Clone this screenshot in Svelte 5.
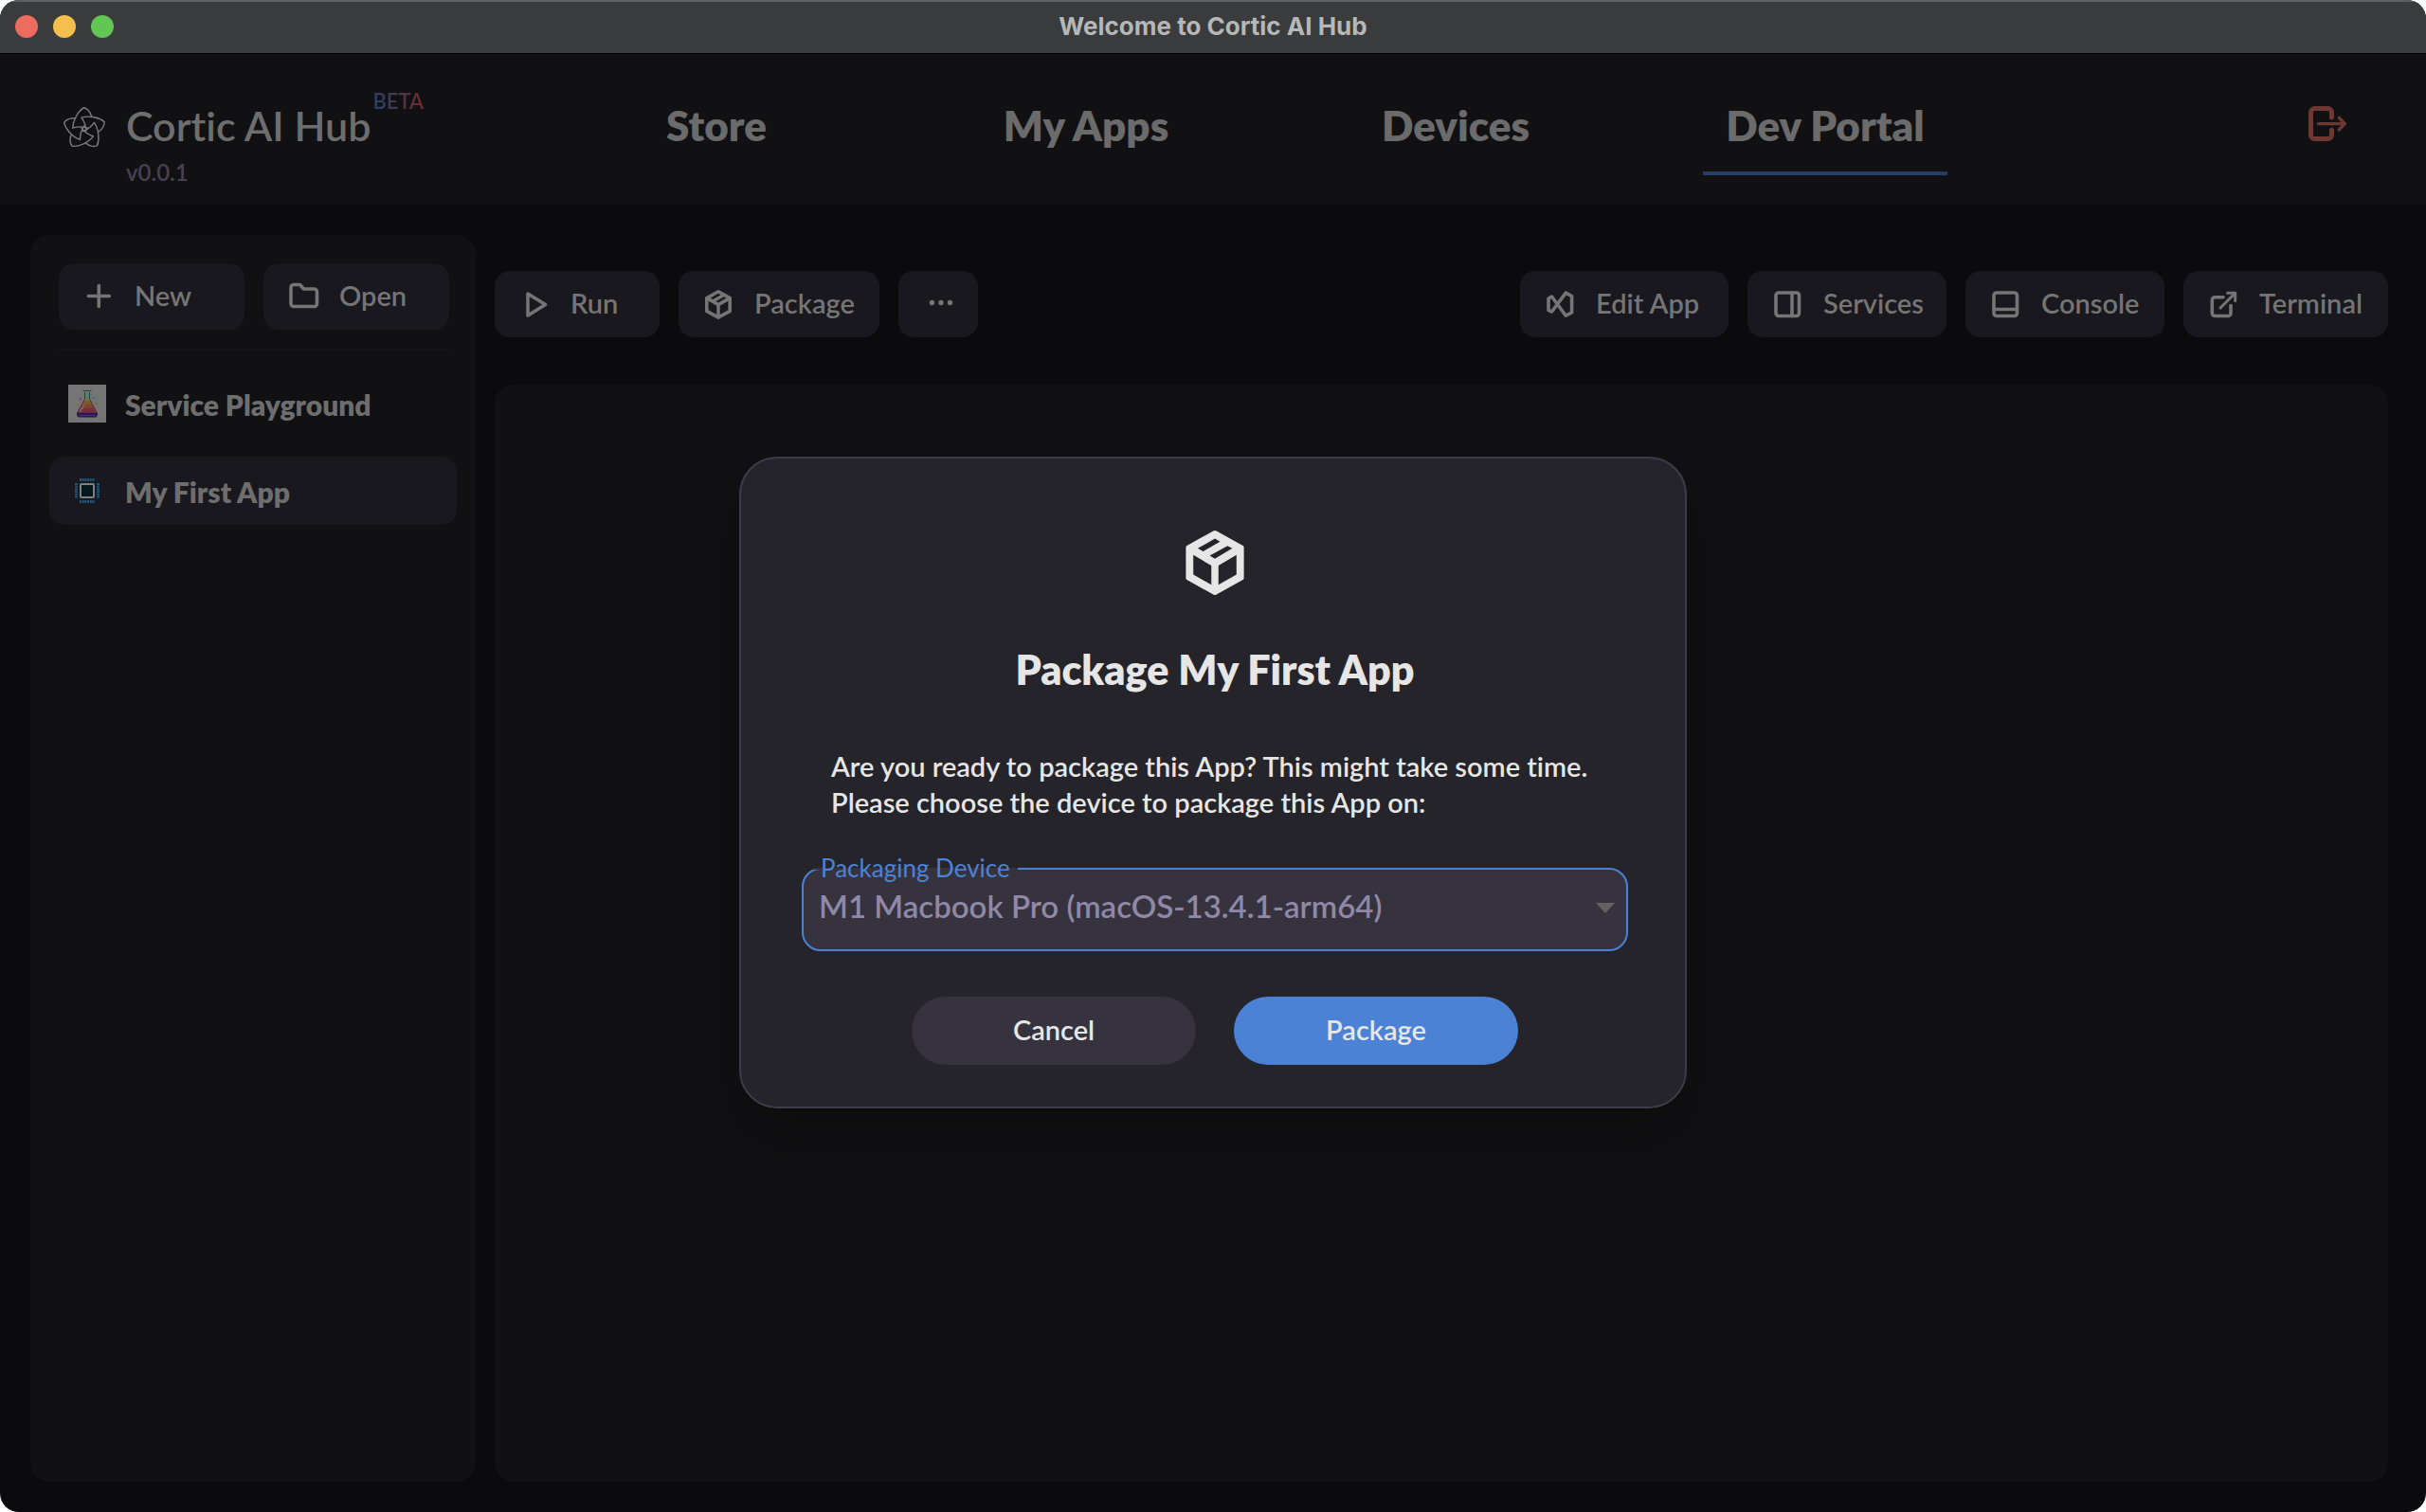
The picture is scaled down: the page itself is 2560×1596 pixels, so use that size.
<script>
  const tabs = [
    { label: 'Store', href: '#store' },
    { label: 'My Apps', href: '#apps' },
    { label: 'Devices', href: '#devices' },
    { label: 'Dev Portal', href: '#dev' }
  ];
  const leftTools = [
    { label: 'Run', icon: 'run', size: 'small' },
    { label: 'Package', icon: 'package', size: 'regular' },
    { label: '', icon: 'more', size: 'tiny' }
  ];
  const rightTools = [
    { label: 'Edit App', icon: 'editor', size: 'large' },
    { label: 'Services', icon: 'services', size: 'medium' },
    { label: 'Console', icon: 'console', size: 'medium' },
    { label: 'Terminal', icon: 'external', size: 'wide' }
  ];
  const angles = [0, 72, 144, 216, 288];
  let activeTab = $state('Dev Portal');
  let device = $state('m1');
</script>

{#snippet cube()}
  <path
    fill="currentColor"
    fill-rule="evenodd"
    d="M11.5 2.15Q12 1.85 12.5 2.15L20.7 6.7Q21 6.9 21 7.3V16.7Q21 17.1 20.7 17.3L12.5 21.85Q12 22.15 11.5 21.85L3.3 17.3Q3 17.1 3 16.7V7.3Q3 6.9 3.3 6.7ZM12 4.5L6.7 7.55L8.35 8.5L13.6 5.45ZM15.9 6.75L10.4 9.8L12 10.75L17.4 7.55ZM5.3 9.6V15.65L10.9 18.85V12.9ZM18.7 9.6L13.1 12.9V18.85L18.7 15.65Z"
  />
{/snippet}

{#snippet icon(name)}
  {#if name === 'package'}
    <svg class="icon" viewBox="1.7 1.4 20.6 20.6" aria-hidden="true">{@render cube()}</svg>
  {:else}
    <svg class="icon line" viewBox="0 0 32 32" aria-hidden="true">
      {#if name === 'run'}
        <path d="M9 5L27.5 16.5L9 28Z" />
      {:else if name === 'more'}
        <g class="dots"><circle cx="9.5" cy="14.5" r="2.7" /><circle cx="19" cy="14.5" r="2.7" /><circle cx="28.5" cy="14.5" r="2.7" /></g>
      {:else if name === 'editor'}
        <path d="M4 10L7.5 8L22.3 28.2L28.6 25V7.6L22.3 4.2L7.5 24L4 22.4Z" />
      {:else if name === 'services'}
        <rect x="4" y="4" width="24.5" height="24.5" rx="3" /><path d="M21 4V28.5" />
      {:else if name === 'console'}
        <rect x="4" y="4" width="24.5" height="24.5" rx="3" /><path d="M4 21.5H28.5" />
      {:else if name === 'external'}
        <path d="M16 8.7H7.3a3 3 0 0 0-3 3V25.5a3 3 0 0 0 3 3H21a3 3 0 0 0 3-3V17.5" />
        <path class="thin" d="M13 20L28.5 4.5M20.5 4.3H28.7V12.5" />
      {:else if name === 'plus'}
        <path d="M16.3 5.5V27.5M5.3 16.5H27.3" />
      {:else if name === 'folder'}
        <path d="M6 4.5h6.5l4 4.5H27.5a3 3 0 0 1 3 3v12.5a3 3 0 0 1-3 3H6a3 3 0 0 1-3-3V7.5a3 3 0 0 1 3-3z" />
      {/if}
    </svg>
  {/if}
{/snippet}

{#snippet tool(item)}
  <button class="tool {item.size}" type="button" aria-label={item.label || 'More actions'}>
    {@render icon(item.icon)}
    {#if item.label}<span>{item.label}</span>{/if}
  </button>
{/snippet}

<div class="window">
  <div class="titlebar">
    <div class="lights"><i class="red"></i><i class="yellow"></i><i class="green"></i></div>
    <div class="title">Welcome to Cortic AI Hub</div>
  </div>

  <header>
    <div class="brand">
      <svg class="logo" viewBox="-24 -24 48 48" aria-hidden="true">
        {#each angles as a}
          <path transform="rotate({a})" d="M7.5 -13.5C6 -19 2 -22 -.5 -22.3C-6 -19 -12 -10 -12.3 -.8C-8 -2.2 -2 -2.6 3 -1" />
        {/each}
      </svg>
      <div class="name">
        <h1>Cortic AI Hub</h1>
        <span class="version">v0.0.1</span>
      </div>
      <span class="beta">BETA</span>
    </div>
    <nav>
      {#each tabs as tab}
        <a href={tab.href} class:active={tab.label === activeTab} onclick={() => (activeTab = tab.label)}>{tab.label}</a>
      {/each}
    </nav>
    <button class="logout" type="button" aria-label="Log out">
      <svg viewBox="0 0 40 37" aria-hidden="true">
        <path d="M24.5 12V6.5a4 4 0 0 0-4-4H6.5a4 4 0 0 0-4 4V30.5a4 4 0 0 0 4 4H20.5a4 4 0 0 0 4-4V25.3" />
        <path class="arrow" d="M10.5 18.6H38M32.3 12.3L38.3 18.6L32.3 24.9" />
      </svg>
    </button>
  </header>

  <div class="content">
    <aside>
      <div class="actions">
        <button class="tool" type="button">{@render icon('plus')}<span>New</span></button>
        <button class="tool" type="button">{@render icon('folder')}<span>Open</span></button>
      </div>
      <div class="apps">
        <button class="app" type="button">
          <svg viewBox="0 0 40 40" aria-hidden="true">
            <rect width="40" height="40" fill="#757575" />
            <g shape-rendering="crispEdges">
              <path fill="#4f8478" d="M18 8h4v6h-4z" />
              <path fill="#717848" d="M18 13h4v3h1v2h-6v-2h1z" />
              <path fill="#7a5a2c" d="M16 17h8v2h1v3H15v-3h1z" />
              <path fill="#7c4430" d="M14 21h12v2h1v2H13v-2h1z" />
              <path fill="#782f3a" d="M12 25h16v2h1v2h1v2H10v-3h1v-2h1z" />
              <path fill="#815c66" d="M15 21h2v2h-1v3h-2v3h-2v-3h1v-2h2z" />
              <path fill="#6b2344" d="M10 29h20v2H10z" />
              <path fill="#2b1752" d="M9 30h22v3h-1v1H10v-1H9z" />
              <path fill="#4b2c80" d="M11 32h18v1H11z" />
              <path fill="#4b494c" d="M11 34h19v1H11z" />
              <path fill="#357a85" d="M25 13h3v2h-3zM28 15h1v1h-1z" />
              <path fill="#84356c" d="M12 14h2v2h-2zM11 16h1v1h-1z" />
              <path fill="#8a5a30" d="M29 19h2v2h-2zM10 20h1v2h-1zM27 18h1v1h-1z" />
            </g>
            <path fill="none" stroke="#26434a" d="M15.5 6.5H24.5M17.5 8V15M22.5 8V15" />
            <path fill="none" stroke="#4e3039" d="M17.5 15L9.5 30M22.5 15L30.5 30" />
          </svg>
          <span>Service Playground</span>
        </button>
        <button class="app selected" type="button">
          <svg viewBox="0 0 40 40" aria-hidden="true">
            <rect x="9" y="9" width="22" height="22" rx="2" fill="#111d27" />
            <g fill="none" stroke="#225577" stroke-width="3" stroke-dasharray="2 .7">
              <path d="M12 8.5H28M12 31.5H28M8.5 12V28M31.5 12V28" />
            </g>
            <rect x="13" y="13" width="14" height="14" rx="1" fill="#06171e" stroke="#808080" stroke-width="2" />
          </svg>
          <span>My First App</span>
        </button>
      </div>
    </aside>

    <main>
      <div class="toolbar">
        <div class="group">{#each leftTools as t}{@render tool(t)}{/each}</div>
        <div class="group">{#each rightTools as t}{@render tool(t)}{/each}</div>
      </div>
      <section class="canvas" aria-label="App output"></section>
    </main>
  </div>

  <div class="overlay">
    <div class="modal" role="dialog" aria-modal="true" aria-labelledby="dialog-title">
      <svg class="cube" viewBox="2 2 20 20" aria-hidden="true">{@render cube()}</svg>
      <h2 id="dialog-title">Package My First App</h2>
      <p>Are you ready to package this App? This might take some time.<br />Please choose the device to package this App on:</p>
      <div class="field">
        <label for="device">Packaging Device</label>
        <select id="device" bind:value={device}>
          <option value="m1">M1 Macbook Pro (macOS-13.4.1-arm64)</option>
        </select>
        <svg class="caret" viewBox="0 0 20 11" aria-hidden="true"><path d="M0 0H20L10 11Z" /></svg>
      </div>
      <div class="buttons">
        <button type="button">Cancel</button>
        <button type="button" class="primary">Package</button>
      </div>
    </div>
  </div>
</div>

<style>
  :global(body) {
    margin: 0;
    background: #fff;
  }
  .window {
    position: relative;
    display: flex;
    flex-direction: column;
    min-height: 100vh;
    overflow: hidden;
    border-radius: 20px;
    background: #0b0b0d;
    color: #6e6e6e;
    font-family: Lato, 'Open Sans', sans-serif;
    font-variant-ligatures: none;
  }
  .window :is(button, select, div, header, aside, main, a) {
    box-sizing: border-box;
  }
  button {
    padding: 0;
    border: 0;
    background: none;
    color: inherit;
    font: inherit;
    cursor: pointer;
  }
  svg {
    display: block;
    flex: none;
  }
  h1,
  h2,
  p {
    margin: 0;
  }

  .titlebar {
    display: grid;
    grid-template-columns: 1fr auto 1fr;
    align-items: center;
    height: 57px;
    padding: 0 16px 2px;
    border-top: 2px solid #5f6062;
    border-bottom: 1px solid #000;
    background: #3a3b3c;
  }
  .lights {
    display: flex;
    gap: 16px;
  }
  .lights i {
    width: 24px;
    height: 24px;
    border-radius: 50%;
  }
  .red {
    background: #ee6b60;
  }
  .yellow {
    background: #f5bf4f;
  }
  .green {
    background: #62c655;
  }
  .title {
    color: #b6b7b7;
    font: 700 26px/32px Inter, sans-serif;
  }

  header {
    display: grid;
    grid-template-columns: 561fr 1560fr 439fr;
    align-items: start;
    height: 159px;
    background: #111113;
  }
  .brand {
    display: flex;
    padding: 38px 0 0 65px;
  }
  .logo {
    width: 48px;
    height: 48px;
    margin: 17px 20px 0 0;
    fill: none;
    stroke: #7c7c7c;
    stroke-width: 1.4;
    stroke-linecap: round;
    stroke-linejoin: round;
  }
  .name {
    padding-top: 12px;
  }
  h1 {
    font-size: 43px;
    font-weight: 600;
    line-height: 52px;
    white-space: nowrap;
  }
  .version {
    display: block;
    margin-top: 9px;
    color: #464253;
    font-size: 24px;
    font-weight: 600;
    line-height: 28px;
  }
  .beta {
    align-self: flex-start;
    margin-left: 2px;
    background: linear-gradient(90deg, #24426e, #6f2c2a);
    background-clip: text;
    color: transparent;
    font-size: 22px;
    font-weight: 600;
    line-height: 24px;
  }
  nav {
    display: grid;
    grid-template-columns: repeat(4, 1fr);
    justify-items: center;
    padding-top: 49px;
  }
  nav a {
    padding: 0 24px 23px;
    border-bottom: 4px solid transparent;
    color: #6b6b6b;
    font-size: 44px;
    font-weight: 800;
    line-height: 52px;
    text-decoration: none;
    white-space: nowrap;
  }
  nav a.active {
    border-color: #233f66;
  }
  .logout {
    justify-self: end;
    margin: 55px 84px 0 0;
  }
  .logout svg {
    width: 40px;
    height: 37px;
    fill: none;
    stroke: #6d3733;
    stroke-width: 5;
    stroke-linecap: round;
    stroke-linejoin: round;
  }
  .logout .arrow {
    stroke-width: 3.4;
  }

  .content {
    display: grid;
    flex: 1;
    grid-template-columns: 470px 1fr;
    gap: 20px;
    padding: 32px 40px 32px 32px;
  }
  aside {
    padding: 30px 20px;
    border-radius: 20px;
    background: #111113;
  }
  .actions {
    display: grid;
    grid-template-columns: 1fr 1fr;
    gap: 20px;
    margin: 0 8px 0 10px;
    padding-bottom: 20px;
    border-bottom: 2px solid #151517;
  }
  .tool {
    display: flex;
    gap: 22px;
    align-items: center;
    height: 70px;
    padding: 0 20px 0 26px;
    border-radius: 16px;
    background: #19181e;
    color: #757575;
    font-size: 29px;
    font-weight: 600;
    line-height: 36px;
    white-space: nowrap;
  }
  .tool span {
    padding-bottom: 3px;
  }
  .actions .tool {
    padding-bottom: 3px;
  }
  .actions .tool span {
    padding-bottom: 0;
  }
  .icon {
    width: 32px;
    height: 32px;
    overflow: visible;
  }
  .line {
    fill: none;
    stroke: currentColor;
    stroke-width: 3.6;
    stroke-linecap: round;
    stroke-linejoin: round;
  }
  .thin {
    stroke-width: 3;
  }
  .dots {
    fill: currentColor;
    stroke: none;
  }
  .apps {
    display: grid;
    gap: 20px;
    padding-top: 20px;
  }
  .app {
    display: flex;
    gap: 20px;
    align-items: center;
    height: 72px;
    padding: 0 20px;
    border-radius: 16px;
    font-size: 30px;
    font-weight: 800;
    line-height: 36px;
  }
  .app span {
    padding-top: 2px;
  }
  .app.selected {
    background: #19181e;
  }
  .app svg {
    width: 40px;
    height: 40px;
  }

  main {
    display: flex;
    flex-direction: column;
    gap: 50px;
    padding-top: 38px;
  }
  .toolbar,
  .group {
    display: flex;
    justify-content: space-between;
    gap: 20px;
  }
  .tiny {
    width: 84px;
  }
  .small {
    min-width: 174px;
  }
  .medium {
    min-width: 210px;
  }
  .regular {
    min-width: 212px;
  }
  .large {
    min-width: 220px;
  }
  .wide {
    min-width: 216px;
  }
  .canvas {
    flex: 1;
    border-radius: 20px;
    background: #111113;
  }

  .overlay {
    position: absolute;
    inset: 56px 0 0;
    display: grid;
    place-items: center;
  }
  .modal {
    display: flex;
    flex-direction: column;
    align-items: center;
    width: 1000px;
    max-width: 100%;
    padding: 76px 60px 44px 64px;
    border: 2px solid #3e3b4a;
    border-radius: 40px;
    background: #25242a;
    box-shadow: 0 30px 60px rgb(0 0 0 / 0.25);
    color: #e6e6e6;
  }
  .cube {
    width: 68px;
    height: 68px;
  }
  h2 {
    margin-top: 54px;
    font-size: 43px;
    font-weight: 800;
    line-height: 50px;
  }
  p {
    align-self: flex-start;
    margin: 58px 0 50px 31px;
    font-size: 29px;
    font-weight: 600;
    line-height: 38px;
  }
  .field {
    position: relative;
    width: 100%;
    height: 88px;
    border: 2px solid #4c82d6;
    border-radius: 20px;
    background: #36333f;
  }
  label {
    position: absolute;
    top: -16px;
    left: 10px;
    padding: 0 8px;
    background: linear-gradient(#36333f, #36333f) 0 14px / 100% 2px no-repeat;
    color: #4c82d6;
    font-size: 26px;
    line-height: 28px;
  }
  select {
    width: 100%;
    height: 100%;
    padding: 0 60px 8px 16px;
    border: 0;
    outline: 0;
    background: none;
    appearance: none;
    color: #8f88a6;
    font: inherit;
    font-size: 33px;
    font-weight: 600;
  }
  .caret {
    position: absolute;
    top: 35px;
    right: 12px;
    width: 20px;
    height: 11px;
    fill: #63625f;
    pointer-events: none;
  }
  .buttons {
    display: flex;
    gap: 40px;
    margin-top: 48px;
  }
  .buttons button {
    width: 300px;
    height: 72px;
    padding-bottom: 4px;
    border-radius: 36px;
    background: #36333f;
    font-size: 29px;
    font-weight: 600;
  }
  .buttons .primary {
    background: #4c82d6;
  }
</style>
